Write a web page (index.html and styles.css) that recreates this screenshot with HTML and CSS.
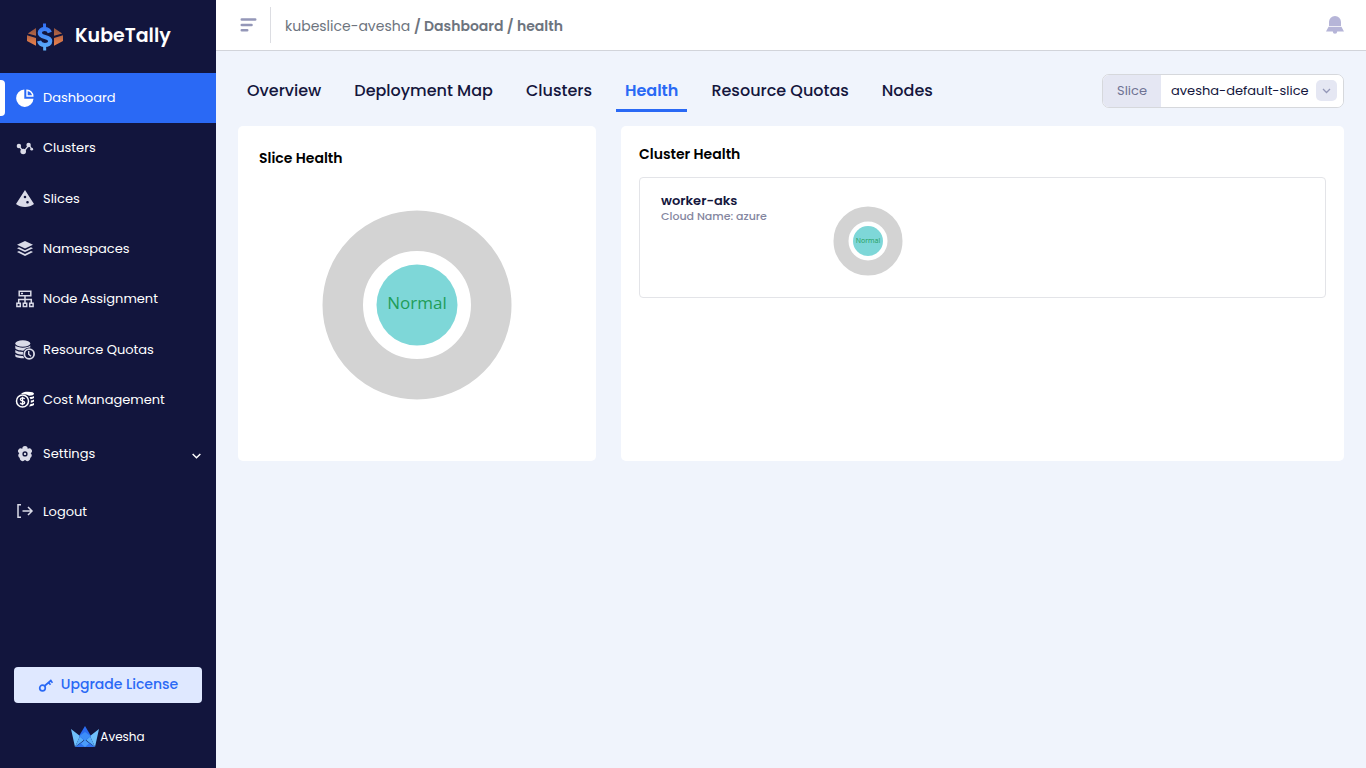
FILE: index.html
```html
<!DOCTYPE html>
<html lang="en">
<head>
<meta charset="utf-8">
<meta name="viewport" content="width=device-width, initial-scale=1">
<title>KubeTally - Health</title>
<link rel="stylesheet" href="styles.css">
</head>
<body>
<div class="app">
  <aside class="sidebar">
    <a class="brand" href="#">
      <svg class="brand-mark" viewBox="0 0 36 28" aria-hidden="true">
        <defs>
          <linearGradient id="copper" gradientUnits="userSpaceOnUse" x1="0" y1="5" x2="0" y2="23"><stop offset="0" stop-color="#8f5240"/><stop offset="1" stop-color="#ee824c"/></linearGradient>
          <linearGradient id="coin" gradientUnits="userSpaceOnUse" x1="0" y1="0" x2="0" y2="28"><stop offset="0" stop-color="#2f6df6"/><stop offset="1" stop-color="#62b5fb"/></linearGradient>
        </defs>
        <path fill="url(#copper)" d="M9 5v7.800L.8 10.500zM0 12.300l9 2.700v7.800L0 18zM27 5v7.800l8.200-2.300zM36 12.300l-9 2.700v7.800l9-4.800z"/>
        <path fill="none" stroke="url(#coin)" stroke-width="4.200" d="M22.800 9.500C22 7 20 6 17.700 6c-3 0-4.900 1.500-4.900 3.800 0 5.700 10.400 2.600 10.400 8.200 0 2.600-2.300 4-5.400 4-3 0-5-1.300-5.800-4"/>
        <path fill="none" stroke="url(#coin)" stroke-width="3" d="M17.500 .5l.1 5M17.600 22l.1 5.500"/>
      </svg>
      <span class="brand-name">KubeTally</span>
    </a>
    <nav class="menu" aria-label="Main">
      <a class="item active" href="#"><svg viewBox="0 0 18 18" aria-hidden="true"><path fill="currentColor" d="M8.300.5v9.200h9.200A8.700 8.700 0 1 1 8.300.5z"/><path fill="none" stroke="currentColor" stroke-width="1.400" d="M11 1.200V7h5.800A6 6 0 0 0 11 1.200z"/></svg>Dashboard</a>
      <a class="item" href="#"><svg viewBox="0 0 18 18" aria-hidden="true"><path fill="none" stroke="currentColor" stroke-width="1.300" d="M3 7l4.500 6L13 6l3 4.500"/><g fill="currentColor"><circle cx="2.900" cy="7" r="2.200"/><circle cx="7.200" cy="12.500" r="2.800"/><circle cx="12.600" cy="6" r="2.200"/><circle cx="15.700" cy="10.200" r="1.400"/></g></svg>Clusters</a>
      <a class="item" href="#"><svg viewBox="0 0 18 18" aria-hidden="true"><path fill="currentColor" fill-rule="evenodd" d="M9 0l9 14c-4.500 4-13.500 4-18 0zM9 5.700a1.300 1.300 0 1 0 0 2.600 1.300 1.300 0 0 0 0-2.600zM11.500 11a1.300 1.300 0 1 0 0 2.600 1.300 1.300 0 0 0 0-2.600z"/></svg>Slices</a>
      <a class="item" href="#"><svg viewBox="0 0 18 18" aria-hidden="true"><path fill="currentColor" d="M9 1l8 3.800-8 3.800-8-3.800zM1 8.200l2-.9 6 2.900 6-2.900 2 .9L9 12zM1 12l2-.9L9 14l6-2.900 2 .9-8 4z"/></svg>Namespaces</a>
      <a class="item" href="#"><svg viewBox="0 0 18 18" aria-hidden="true"><path fill="none" stroke="currentColor" stroke-width="1.500" d="M3.200 1.200h11.600v4.600H3.200zM9 6v7M2.700 13V9.500h12.600V13M.9 13.200h3.400v3.400H.9zM7.300 13.200h3.400v3.400H7.300zM13.700 13.200h3.400v3.400h-3.400zM5 3.500h2"/></svg>Node Assignment</a>
      <a class="item" href="#"><svg class="wide" viewBox="0 0 20 20" aria-hidden="true"><g fill="currentColor"><ellipse cx="7.800" cy="3.500" rx="7.500" ry="3.300"/><path d="M.3 5.600c3 2.700 12 2.700 15 0v2c-3 0-5.500 1-6.500 3C5 10.800 1 9.800.3 8.300zM.3 10c1.500 1.300 4.500 1.900 7.800 1.900l-.3 2.800C4 14.700 1 13.700.3 12.500zM.3 14.200c1.500 1.200 4.500 1.900 7.800 1.700l1.200 2.400C5 18.300 1 17.500.3 16.200z"/></g><circle cx="14.200" cy="14" r="4.900" fill="none" stroke="currentColor" stroke-width="1.800"/><path d="M13.700 11v3.300l2.300 2" fill="none" stroke="currentColor" stroke-width="1.400"/></svg>Resource Quotas</a>
      <a class="item bright" href="#"><svg class="wide" viewBox="0 0 20 20" aria-hidden="true"><path fill="currentColor" d="M6 4c1-1.700 4-2.200 7-2.200 4 0 6 .9 6 2 0 1.200-2 1.800-5 2-2-1.500-5-2.200-8-1.800zM14.500 7.100c2-.1 3.500-.6 4.500-1.200v2c-.8.700-2 1.100-3.500 1.300zM15.800 10.500c1.300-.1 2.400-.5 3.200-1v2c-.8.700-2 1.100-3.200 1.300zM15.600 14c1.500-.1 2.600-.5 3.400-1v2.100c-1 .8-3 1.300-5 1.400z"/><circle cx="7.500" cy="11" r="6" fill="none" stroke="currentColor" stroke-width="1.500"/><path fill="none" stroke="currentColor" stroke-width="1.300" d="M9.700 9C8.500 7.300 5.400 7.700 5.400 9.400c0 2 4.300 1.200 4.300 3.200 0 1.800-3.400 2-4.500.2M7.500 6.700v8.600"/></svg>Cost Management</a>
    </nav>
    <nav class="menu-extra" aria-label="Account">
      <a class="item" href="#"><svg viewBox="0 0 18 18" aria-hidden="true"><path fill="currentColor" fill-rule="evenodd" d="M6.300 3.800a2.700 2.700 0 0 1 5.400 0 2.700 2.700 0 0 1 3 4.500 2.800 2.800 0 0 1-.5 4.700 2.700 2.700 0 0 1-4.600 2.300h-1.200A2.700 2.700 0 0 1 3.800 13a2.800 2.800 0 0 1-.5-4.700 2.700 2.700 0 0 1 3-4.500zM9 6.300a2.600 2.600 0 1 0 0 5.200 2.600 2.600 0 0 0 0-5.200z"/><circle cx="9" cy="8.900" r="1.200" fill="currentColor"/></svg>Settings<svg class="caret" viewBox="0 0 10 10" aria-hidden="true"><path d="M1.500 4.500L5 8l3.500-3.500" fill="none" stroke="#fff" stroke-width="1.300"/></svg></a>
      <a class="item" href="#"><svg viewBox="0 0 18 18" aria-hidden="true"><path fill="none" stroke="currentColor" stroke-width="1.500" d="M5 1.700H2v12.600h3M6.500 8h9M12 4l4 4-4 4"/></svg>Logout</a>
    </nav>
    <div class="side-foot">
      <button class="upgrade" type="button"><svg viewBox="0 0 16 16" aria-hidden="true"><g fill="none" stroke="currentColor" stroke-width="1.700"><circle cx="4.500" cy="11" r="2.800"/><path d="M6.500 9L13.500 3M10.500 5.500l2 2.200M12.500 3.500l2 2.200"/></g></svg>Upgrade License</button>
      <a class="maker" href="#">
        <svg viewBox="0 0 28 22" aria-hidden="true"><path fill="#6fc0fb" d="M0 3l9 7-5 11zM28 3l-9 7 5 11z"/><path fill="#57adfa" d="M4 21L9 10l4 4zM24 21l-5-11-4 4z"/><path fill="#2b6cf0" d="M14 0l6 10-6 5-6-5z"/><path fill="#3c8df8" d="M14 6l5.500 4L14 15l-5.500-5z"/><path fill="#2f74ee" d="M14 14l10 7H4z"/><path fill="#4b9cfa" d="M14 14l4 3.500-4 3.500-4-3.500z"/></svg>
        <span>Avesha</span>
      </a>
    </div>
  </aside>

  <div class="page">
    <header class="topbar">
      <button class="toggle" type="button" aria-label="Toggle menu"><svg viewBox="0 0 16 14" aria-hidden="true"><path fill="none" stroke="#9497b8" stroke-width="2.600" stroke-linecap="round" d="M1.300 1.500h13.400M1.300 7h9.700M1.300 12.300h5.400"/></svg></button>
      <div class="crumbs"><span>kubeslice-avesha</span> <strong>/ Dashboard / health</strong></div>
      <button class="bell" type="button" aria-label="Notifications"><svg viewBox="0 0 18 18" aria-hidden="true"><path fill="#b6b5d8" d="M3 9.900V6a6 6 0 0 1 12 0v3.900zM2.600 10.700h12.800L18 15.500h-6.800a2.200 2.200 0 0 1-4.400 0H0z"/></svg></button>
    </header>
    <main class="content">
      <div class="toolbar">
        <nav class="tabs" aria-label="Dashboard sections">
          <a href="#">Overview</a><a href="#">Deployment Map</a><a href="#">Clusters</a><a class="current" href="#" aria-current="page">Health</a><a href="#">Resource Quotas</a><a href="#">Nodes</a>
        </nav>
        <div class="picker">
          <label for="slice">Slice</label>
          <div class="picker-field">
            <select id="slice"><option>avesha-default-slice</option></select>
            <svg class="picker-arrow" viewBox="0 0 21 21" aria-hidden="true"><rect width="21" height="21" rx="5" fill="#e5e7f3"/><path d="M7 9l3.500 3.500L14 9" fill="none" stroke="#9497b8" stroke-width="1.300"/></svg>
          </div>
        </div>
      </div>
      <div class="cards">
        <section class="card slice-card">
          <h2>Slice Health</h2>
          <svg class="donut-large" viewBox="0 0 190 190" role="img" aria-label="Slice health: Normal"><circle cx="95" cy="95" r="74.250" fill="none" stroke="#d3d3d3" stroke-width="40.500"/><circle cx="95" cy="95" r="40.500" fill="#7ed7d8"/><text class="donut-label" x="95" y="99">Normal</text></svg>
        </section>
        <section class="card cluster-card">
          <h2>Cluster Health</h2>
          <article class="cluster">
            <div class="cluster-info"><h3>worker-aks</h3><p>Cloud Name: azure</p></div>
            <svg class="donut-small" viewBox="0 0 70 70" role="img" aria-label="worker-aks health: Normal"><circle cx="35" cy="35" r="27" fill="none" stroke="#d3d3d3" stroke-width="15"/><circle cx="35" cy="35" r="15" fill="#7ed7d8"/><text class="donut-label small" x="35" y="37">Normal</text></svg>
          </article>
        </section>
      </div>
    </main>
  </div>
</div>
</body>
</html>
```
FILE: styles.css
```css
* { box-sizing: border-box; }
body { margin: 0; background: #f0f4fc; color: #14163d; font-family: Poppins, Inter, sans-serif; font-size: 13px; }
a { color: inherit; text-decoration: none; }
button { border: 0; padding: 0; background: none; font: inherit; cursor: pointer; }
svg { display: block; flex: none; }
h2, h3, p { margin: 0; }

.app { display: flex; min-height: 100vh; }
.sidebar { display: flex; flex-direction: column; flex: none; width: 216px; background: #12153d; color: #fff; }
.brand { display: flex; align-items: center; gap: 12px; height: 73px; padding-left: 27px; }
.brand-mark { width: 36px; height: 28px; }
.brand-name { padding-bottom: 2px; font-size: 19px; font-weight: 600; line-height: 24px; }
.menu { display: flex; flex-direction: column; justify-content: space-between; min-height: 352px; }
.item { display: flex; align-items: center; gap: 9px; height: 50px; padding: 0 14px 0 16px; }
.item svg { width: 18px; height: 18px; color: #dadbe8; }
.item .wide { width: 20px; height: 20px; margin: 0 -1px; }
.item.bright svg { color: #fff; }
.item.active { background: #2a69f5; padding-left: 0; }
.item.active::before { content: ""; width: 5px; height: 36px; margin-right: 2px; border-radius: 0 4px 4px 0; background: #fff; }
.item.active svg { color: #fff; }
.item .caret { width: 11px; height: 11px; margin-left: auto; }
.menu-extra { display: flex; flex-direction: column; gap: 8px; padding-top: 4px; }
.side-foot { display: flex; flex-direction: column; gap: 22px; margin-top: auto; padding: 0 14px 20px; }
.upgrade { display: flex; align-items: center; justify-content: center; gap: 7px; height: 36px; padding-bottom: 1px; border-radius: 4px; background: #dfe8ff; color: #2a69f5; font-size: 14px; font-weight: 500; }
.upgrade svg { width: 16px; height: 16px; }
.maker { display: flex; align-items: center; justify-content: center; gap: 1px; height: 23px; font-size: 12px; font-weight: 400; }
.maker svg { width: 28px; height: 22px; }

.page { flex: 1; min-width: 0; }
.topbar { display: flex; align-items: center; height: 51px; padding: 0 22px; border-bottom: 1px solid #d2d4da; background: #fff; }
.toggle { display: flex; align-items: center; width: 33px; height: 36px; padding-left: 2px; border-right: 1px solid #dcdde2; }
.toggle svg { width: 17px; height: 14px; }
.crumbs { flex: 1; padding: 2px 0 0 14px; color: #6d747e; font-size: 14px; }
.crumbs strong { font-weight: 600; }
.bell svg { width: 18px; height: 18px; }

.content { padding: 23px 22px; }
.toolbar { display: flex; align-items: flex-start; justify-content: space-between; gap: 16px; }
.tabs { display: flex; gap: 15px; height: 38px; font-size: 16px; font-weight: 500; line-height: 34px; }
.tabs a { padding: 0 9px; white-space: nowrap; }
.tabs .current { border-bottom: 3px solid #2a69f5; color: #2a69f5; font-weight: 600; }
.picker { display: flex; width: 242px; height: 34px; border: 1px solid #d6d8dc; border-radius: 7px; overflow: hidden; background: #fff; }
.picker label { flex: none; width: 58px; background: #e5e7f3; color: #6f7393; line-height: 32px; text-align: center; }
.picker-field { position: relative; flex: 1; }
.picker select { width: 100%; height: 32px; padding: 0 28px 2px 10px; border: 0; appearance: none; background: #fff; color: #14163d; font: inherit; }
.picker-arrow { position: absolute; top: 5px; right: 6px; width: 21px; height: 21px; pointer-events: none; }

.cards { display: grid; grid-template-columns: 358fr 723fr; gap: 25px; margin-top: 14px; }
.card { min-height: 335px; border-radius: 5px; background: #fff; }
.card h2 { color: #000; font-size: 14px; font-weight: 600; line-height: 20px; }
.slice-card { padding: 22px 21px; }
.donut-large { width: 190px; height: 190px; margin: 42px auto 0; }
.donut-label { fill: #1f9d58; font-family: "Open Sans", sans-serif; font-size: 17px; text-anchor: middle; }
.donut-label.small { font-size: 7px; }
.cluster-card { padding: 18px; }
.cluster { display: flex; min-height: 121px; margin-top: 13px; padding: 15px 21px; border: 1px solid #e3e4e8; border-radius: 4px; }
.cluster-info { width: 172px; }
.cluster h3 { font-size: 13px; font-weight: 600; line-height: 15px; }
.cluster p { color: #8486a0; font-size: 11px; font-weight: 500; line-height: 16px; }
.donut-small { width: 70px; height: 70px; margin-top: 13px; }
```
